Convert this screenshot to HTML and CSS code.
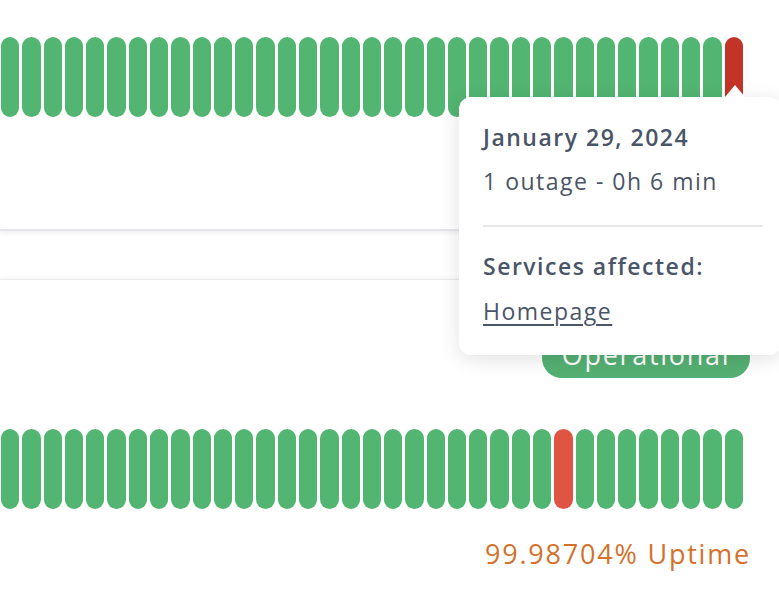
FILE: index.html
```html
<!DOCTYPE html>
<html>
<head>
<meta charset="utf-8">
<link rel="stylesheet" href="styles.css">
</head>
<body>
<div class="page">
  <section class="card card-top">
    <div class="bars" id="bars1"></div>
  </section>
  <section class="card card-bottom">
    <div class="status-row"><span class="badge">Operational</span></div>
    <div class="bars" id="bars2"></div>
    <div class="uptime">99.98704% Uptime</div>
  </section>
  <div class="tooltip">
    <div class="tt-date">January 29, 2024</div>
    <div class="tt-outage">1 outage - 0h 6 min</div>
    <div class="tt-sep"></div>
    <div class="tt-title">Services affected:</div>
    <a class="tt-link" href="#">Homepage</a>
  </div>
</div>
<script>
function fill(id, redIndex, cls) {
  var el = document.getElementById(id);
  for (var i = 0; i < 35; i++) {
    var b = document.createElement('span');
    b.className = 'bar' + (i === redIndex ? ' ' + cls : '');
    el.appendChild(b);
  }
}
fill('bars1', 34, 'bar-red-dark');
fill('bars2', 26, 'bar-red');
</script>
</body>
</html>
```
FILE: styles.css
```css
html, body {
  margin: 0;
  padding: 0;
  background: #fff;
  overflow: hidden;
}
body {
  width: 779px;
  height: 606px;
  font-family: "Open Sans", "Noto Sans", sans-serif;
  color: #4a5568;
}
.page {
  position: relative;
  width: 779px;
  height: 606px;
}
.card {
  background: #fff;
}
.card-top {
  height: 231px;
  padding-top: 37px;
  box-sizing: border-box;
  border-bottom: 2px solid #e4e4ea;
  box-shadow: 0 3px 4px rgba(0,0,0,0.05);
}
.card-bottom {
  margin-top: 48px;
  border-top: 1px solid #ebebef;
  box-shadow: 0 -2px 4px rgba(0,0,0,0.03);
  padding-top: 57px;
}
.bars {
  display: flex;
  gap: 3px;
  width: 742px;
  margin-left: 1px;
  height: 80px;
}
.bar {
  flex: 1;
  border-radius: 10px;
  background: #53b572;
}
.bar-red-dark { background: #c23526; }
.bar-red { background: #e05444; }
.status-row {
  display: flex;
  justify-content: flex-end;
  padding-right: 29px;
  height: 41px;
  margin-bottom: 51px;
}
.badge {
  background: #55b073;
  color: #fff;
  border-radius: 20px;
  height: 41px;
  width: 208px;
  box-sizing: border-box;
  padding-bottom: 6px;
  display: flex;
  align-items: center;
  justify-content: center;
  font-size: 27px;
  letter-spacing: 1.7px;
}
.uptime {
  text-align: right;
  padding-right: 28px;
  margin-top: 26px;
  font-size: 27px;
  letter-spacing: 1.8px;
  color: #d4712c;
}
.tooltip {
  position: absolute;
  left: 459px;
  top: 97px;
  width: 322px;
  height: 258px;
  box-sizing: border-box;
  background: #fff;
  border-radius: 12px;
  box-shadow: 0 4px 20px rgba(0,0,0,0.12);
  padding: 24px 18px 0 24px;
  font-size: 23px;
  letter-spacing: 1.5px;
}
.tooltip::before {
  content: "";
  position: absolute;
  left: 266px;
  top: -12px;
  border-left: 10px solid transparent;
  border-right: 10px solid transparent;
  border-bottom: 12px solid #fff;
}
.tt-date {
  font-weight: 600;
  line-height: 32px;
}
.tt-outage {
  line-height: 32px;
  margin-top: 12px;
}
.tt-sep {
  height: 2px;
  background: #e6e7ec;
  margin: 28px 0 0 0;
}
.tt-title {
  font-weight: 600;
  line-height: 32px;
  margin-top: 23px;
}
.tt-link {
  display: inline-block;
  color: #4a5568;
  line-height: 32px;
  margin-top: 13px;
  text-decoration: underline;
  text-underline-offset: 4px;
}
```
